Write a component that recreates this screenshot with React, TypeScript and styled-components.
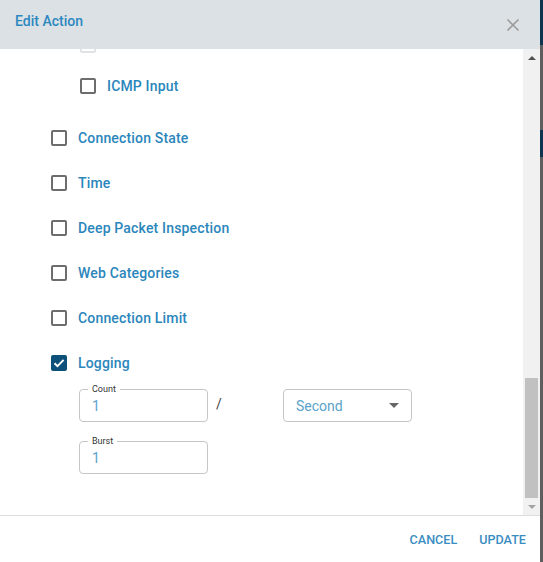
import React from "react";
import styled, { createGlobalStyle } from "styled-components";

const Global = createGlobalStyle`
  html, body { margin: 0; padding: 0; }
  body { font-family: Roboto, "Noto Sans", sans-serif; overflow: hidden; }
`;

const Page = styled.div`
  display: flex;
  width: 543px;
  height: 562px;
  overflow: hidden;
`;

const Dialog = styled.div`
  width: 540px;
  height: 562px;
  display: flex;
  flex-direction: column;
  background: #fff;
  flex-shrink: 0;
`;

const Backdrop = styled.div`
  flex: 1;
  display: flex;
  flex-direction: column;
  background: #5e5e5e;
`;

const BackdropBand = styled.div<{ $h: number; $c: string }>`
  height: ${(p) => p.$h}px;
  background: ${(p) => p.$c};
  flex-shrink: 0;
`;

const Header = styled.div`
  height: 49px;
  background: #dce1e5;
  display: flex;
  align-items: center;
  justify-content: space-between;
  padding: 0 20px 0 15px;
  flex-shrink: 0;
`;

const Title = styled.div`
  font-size: 14px;
  font-weight: 500;
  color: #2d88bf;
  margin-top: -7px;
`;

const Close = styled.button`
  border: 0;
  background: none;
  padding: 0;
  width: 14px;
  height: 14px;
  display: flex;
  cursor: pointer;
`;

const Body = styled.div`
  flex: 0 0 466px;
  display: flex;
  overflow: hidden;
`;

const Content = styled.div`
  flex: 1;
  overflow: hidden;
`;

const Inner = styled.div`
  margin-top: -23.5px;
  padding: 0 0 0 51px;
  display: flex;
  flex-direction: column;
`;

const SubList = styled.div`
  display: flex;
  flex-direction: column;
  padding-left: 29px;
  margin-bottom: 7px;
`;

const Row = styled.label`
  height: 45px;
  display: flex;
  align-items: center;
  gap: 11px;
  cursor: pointer;
`;

const ClippedRow = styled(Row)`
  height: 38px;
`;

const Box = styled.span<{ $checked?: boolean; $faded?: boolean }>`
  width: 16px;
  height: 16px;
  box-sizing: border-box;
  border-radius: 2px;
  border: 2px solid ${(p) => (p.$checked ? "#0d5079" : p.$faded ? "#e2e2e2" : "#6d6d6d")};
  background: ${(p) => (p.$checked ? "#0d5079" : "#fff")};
  display: flex;
  align-items: center;
  justify-content: center;
  flex-shrink: 0;
`;

const Label = styled.span`
  font-size: 14px;
  font-weight: 500;
  letter-spacing: 0.17px;
  color: #2b86bb;
`;

const Fields = styled.div`
  padding-left: 28px;
  margin-top: 3.5px;
  display: flex;
  flex-direction: column;
  gap: 19px;
  padding-bottom: 41px;
`;

const FieldRow = styled.div`
  display: flex;
  align-items: center;
`;

const Outlined = styled.div`
  position: relative;
  width: 129px;
  height: 33px;
  box-sizing: border-box;
  border: 1px solid #c6c6c6;
  border-radius: 4px;
  display: flex;
  align-items: center;
  padding: 0 12px;
  font-size: 14px;
  color: #5aa2ca;
`;

const FloatLabel = styled.span`
  position: absolute;
  left: 8px;
  top: -7px;
  padding: 0 4px;
  background: #fff;
  font-size: 9px;
  line-height: 12px;
  color: #333;
`;

const Slash = styled.span`
  width: 75px;
  box-sizing: border-box;
  padding-left: 8px;
  font-size: 14px;
  color: #444;
  margin-top: -3px;
`;

const SelectBox = styled(Outlined)`
  justify-content: space-between;
  cursor: pointer;
`;

const Caret = styled.span`
  width: 0;
  height: 0;
  border-left: 5px solid transparent;
  border-right: 5px solid transparent;
  border-top: 5px solid #666;
`;

const Scrollbar = styled.div`
  width: 17px;
  flex-shrink: 0;
  background: #f1f1f1;
  display: flex;
  flex-direction: column;
`;

const ArrowBtn = styled.div<{ $down?: boolean }>`
  height: 17px;
  display: flex;
  align-items: center;
  justify-content: center;
  &::after {
    content: "";
    width: 0;
    height: 0;
    border-left: 4px solid transparent;
    border-right: 4px solid transparent;
    ${(p) =>
      p.$down
        ? "border-top: 4px solid #a3a3a3;"
        : "border-bottom: 4px solid #505050;"}
  }
`;

const Track = styled.div`
  flex: 1;
  display: flex;
  flex-direction: column;
  justify-content: flex-end;
  padding: 0 2px;
`;

const Thumb = styled.div`
  height: 120px;
  background: #c1c1c1;
`;

const Footer = styled.div`
  height: 46px;
  border-top: 1px solid #dddddd;
  display: flex;
  align-items: center;
  justify-content: flex-end;
  gap: 22px;
  padding: 0 14px 0 0;
  flex-shrink: 0;
`;

const TextButton = styled.button`
  border: 0;
  background: none;
  padding: 0;
  font-family: Roboto, sans-serif;
  font-size: 12.6px;
  font-weight: 500;
  color: #3a8dc1;
  text-transform: uppercase;
  cursor: pointer;
`;

const Check = () => (
  <svg width="12" height="12" viewBox="0 0 12 12">
    <path d="M1.5 6.2 L4.5 9.1 L10.6 2.9" fill="none" stroke="#fff" strokeWidth="2" />
  </svg>
);

const Item = ({ text, checked }: { text: string; checked?: boolean }) => (
  <Row>
    <Box $checked={checked}>{checked && <Check />}</Box>
    <Label>{text}</Label>
  </Row>
);

export default function App() {
  return (
    <>
      <Global />
      <Page>
        <Dialog>
          <Header>
            <Title>Edit Action</Title>
            <Close aria-label="close">
              <svg width="14" height="14" viewBox="0 0 14 14">
                <path d="M1.5 1.5 L12.5 12.5 M12.5 1.5 L1.5 12.5" stroke="#9b9b9b" strokeWidth="1.6" />
              </svg>
            </Close>
          </Header>
          <Body>
            <Content>
              <Inner>
                <SubList>
                  <ClippedRow>
                    <Box $faded />
                  </ClippedRow>
                  <Item text="ICMP Input" />
                </SubList>
                <Item text="Connection State" />
                <Item text="Time" />
                <Item text="Deep Packet Inspection" />
                <Item text="Web Categories" />
                <Item text="Connection Limit" />
                <Item text="Logging" checked />
                <Fields>
                  <FieldRow>
                    <Outlined>
                      <FloatLabel>Count</FloatLabel>1
                    </Outlined>
                    <Slash>/</Slash>
                    <SelectBox>
                      Second
                      <Caret />
                    </SelectBox>
                  </FieldRow>
                  <FieldRow>
                    <Outlined>
                      <FloatLabel>Burst</FloatLabel>1
                    </Outlined>
                  </FieldRow>
                </Fields>
              </Inner>
            </Content>
            <Scrollbar>
              <ArrowBtn />
              <Track>
                <Thumb />
              </Track>
              <ArrowBtn $down />
            </Scrollbar>
          </Body>
          <Footer>
            <TextButton>Cancel</TextButton>
            <TextButton>Update</TextButton>
          </Footer>
        </Dialog>
        <Backdrop>
          <BackdropBand $h={45} $c="#0d3550" />
          <BackdropBand $h={85} $c="#5e5e5e" />
          <BackdropBand $h={27} $c="#0d3550" />
        </Backdrop>
      </Page>
    </>
  );
}
